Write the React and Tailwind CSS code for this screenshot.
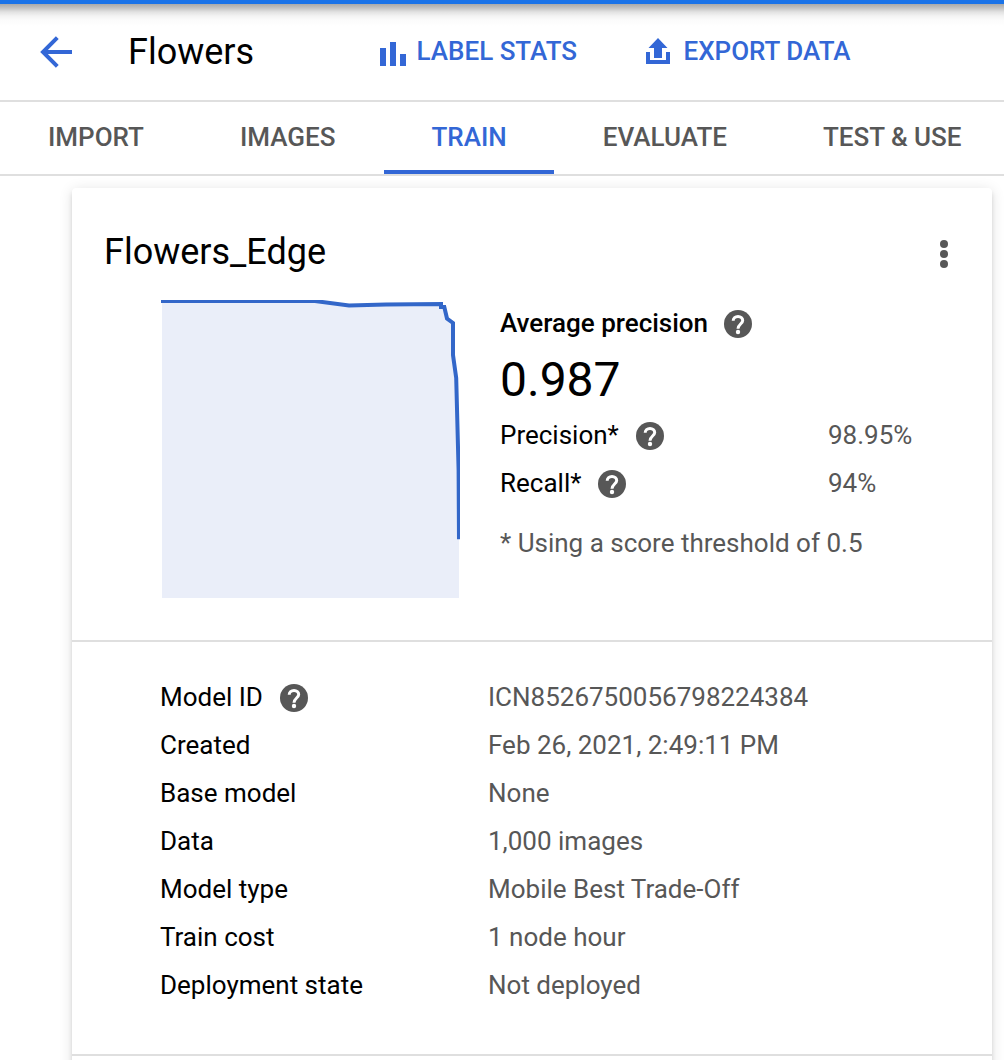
const tabs = ["IMPORT", "IMAGES", "TRAIN", "EVALUATE", "TEST & USE"];

const details = [
  ["Model ID", "ICN8526750056798224384", true],
  ["Created", "Feb 26, 2021, 2:49:11 PM"],
  ["Base model", "None"],
  ["Data", "1,000 images"],
  ["Model type", "Mobile Best Trade-Off"],
  ["Train cost", "1 node hour"],
  ["Deployment state", "Not deployed"],
];

function HelpIcon({ className = "" }) {
  return (
    <svg viewBox="0 0 28 28" className={`size-7 shrink-0 ${className}`} fill="none">
      <circle cx="14" cy="14" r="14" fill="#575757" />
      <path
        d="M9.2 10.7C9.2 8.1 11.3 6.4 14 6.4s4.7 1.7 4.7 4.1c0 3.3-4.7 3.9-4.7 8.2"
        stroke="#fff"
        strokeWidth="3"
      />
      <circle cx="14" cy="22" r="2.2" fill="#fff" />
    </svg>
  );
}

function BackIcon() {
  return (
    <svg viewBox="0 0 32 32" className="size-8" fill="none" stroke="#3367d6" strokeWidth="4">
      <path d="M4 16h28" />
      <path d="M17.3 1.7L3 16l14.3 14.3" />
    </svg>
  );
}

function BarsIcon() {
  return (
    <svg viewBox="0 0 26 24" className="h-6 w-[26px]" fill="#3367d6">
      <path d="M0 6h6v18H0zM10 0h6v24h-6zM20 12h6v12h-6z" />
    </svg>
  );
}

function ExportIcon() {
  return (
    <svg viewBox="0 0 24 26" className="h-[26px] w-6" fill="#3367d6">
      <path d="M12 0l9.5 10H16v10H8V10H2.5z" />
      <path d="M0 14h4v8h16v-8h4v12H0z" />
    </svg>
  );
}

function CurveChart() {
  return (
    <svg viewBox="0 0 299 298" className="h-[298px] w-[299px] shrink-0">
      <path
        d="M1 1H154L187.5 5.6L225 4.6L280 4V7H283L286 18.5L292 23V55L295 78L298 170V298H1z"
        fill="#eaeef9"
      />
      <path
        d="M0 1H154L188 5.6L225 4.6L280 4V7H283.3L286 18.5L292 23V55L295.2 78L297.6 170L298 239.3"
        fill="none"
        stroke="#3367c9"
        strokeWidth="4"
      />
    </svg>
  );
}

export default function App() {
  return (
    <div className="h-[1060px] w-[1004px] overflow-hidden bg-white font-['Roboto',sans-serif] text-[26px] text-black">
      <header className="flex h-[102px] items-start border-b-2 border-t-4 border-b-[#dfdfdf] border-t-[#1a73e8] bg-[linear-gradient(to_bottom,#a9a9a9_0px,#c2c2c2_4px,#e2e2e2_8px,#f3f3f3_12px,#fbfbfb_16px,#fff_22px)] bg-no-repeat">
        <button className="ml-10 mt-8">
          <BackIcon />
        </button>
        <h1 className="ml-14 mt-6 w-[252px] text-4xl leading-12">Flowers</h1>
        <button className="mt-[23px] flex h-12 w-[266px] shrink-0 items-center gap-[10.5px] font-medium text-[#3367d6]">
          <span className="pt-1.5">
            <BarsIcon />
          </span>
          <span className="leading-12">LABEL STATS</span>
        </button>
        <button className="mt-[23px] flex h-12 shrink-0 items-center gap-[13.5px] font-medium text-[#3367d6]">
          <ExportIcon />
          <span className="leading-12">EXPORT DATA</span>
        </button>
      </header>

      <nav className="flex h-[74px] border-b-2 border-[#dfdfdf] font-medium text-[#575757]">
        {tabs.map((t) => (
          <a
            key={t}
            className={`h-[72px] shrink-0 whitespace-nowrap px-12 pt-[11px] leading-12 ${
              t === "TRAIN"
                ? "relative text-[#3367d6] after:absolute after:bottom-0 after:left-[0.7px] after:h-1 after:w-[170px] after:bg-[#3367d6]"
                : ""
            }`}
          >
            {t}
          </a>
        ))}
      </nav>

      <main className="h-[884px] overflow-hidden pl-[72px] pr-3 pt-3">
        <article className="h-[920px] rounded bg-white shadow-[0_2px_14px_rgba(0,0,0,0.12),0_4px_4px_rgba(0,0,0,0.12)]">
          <section className="h-[454px] border-b-2 border-[#dfdfdf]">
            <div className="flex h-[111px] justify-between pl-8 pr-11">
              <h2 className="pt-10 text-4xl leading-12">Flowers_Edge</h2>
              <svg viewBox="0 0 8 28" className="mt-[52px] h-7 w-2" fill="#575757">
                <circle cx="4" cy="4" r="4" />
                <circle cx="4" cy="14" r="4" />
                <circle cx="4" cy="24" r="4" />
              </svg>
            </div>
            <div className="flex pl-[89px]">
              <div className="pt-px">
                <CurveChart />
              </div>
              <div className="ml-10 flex-1">
                <div className="flex h-12 items-center gap-4 font-medium leading-12">
                  Average precision
                  <HelpIcon className="mt-0.5" />
                </div>
                <div className="h-16 pt-px text-5xl leading-16">0.987</div>
                <div className="flex h-12 items-center leading-12">
                  <div className="flex w-82 items-center gap-[17px]">
                    Precision*
                    <HelpIcon className="mt-0.5" />
                  </div>
                  <span className="text-[#575757]">98.95%</span>
                </div>
                <div className="flex h-12 items-center leading-12">
                  <div className="flex w-82 items-center gap-[17px]">
                    Recall*
                    <HelpIcon className="mt-0.5" />
                  </div>
                  <span className="text-[#575757]">94%</span>
                </div>
                <p className="mt-3 leading-12 text-[#575757]">* Using a score threshold of 0.5</p>
              </div>
            </div>
          </section>

          <section className="h-[414px] border-b-2 border-[#dfdfdf] pl-[88px] pt-[31px]">
            {details.map(([label, value, help]) => (
              <div key={label} className="flex h-12 leading-12">
                <div className="flex w-82 items-center gap-[17px]">
                  {label}
                  {help && <HelpIcon className="mt-0.5" />}
                </div>
                <span className="text-[#575757]">{value}</span>
              </div>
            ))}
          </section>
        </article>
      </main>
    </div>
  );
}
